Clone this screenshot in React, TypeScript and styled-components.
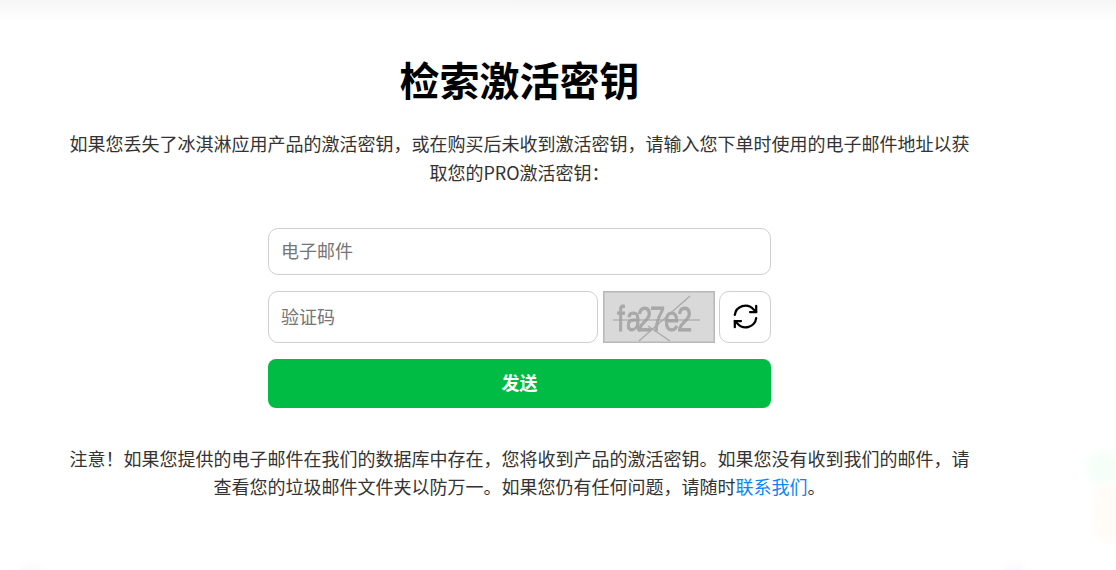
import React from "react";
import styled, { createGlobalStyle } from "styled-components";

const Global = createGlobalStyle`
  html, body { margin: 0; padding: 0; background: #fff; }
  body { font-family: "Noto Sans CJK SC", "Noto Sans", sans-serif; overflow: hidden; }
  * { box-sizing: border-box; }
`;

const Page = styled.main`
  position: relative;
  width: 1116px;
  height: 570px;
  overflow: hidden;
  padding: 0 146.5px 0 69.5px;
  background: #fff;
`;

const TopShade = styled.div`
  position: absolute;
  inset: 0 0 auto 0;
  height: 22px;
  background: linear-gradient(to bottom, #f6f6f6, #fff);
`;

const Blob = styled.div<{ $color: string; $left: number; $top: number; $w: number; $h: number }>`
  position: absolute;
  left: ${(p) => p.$left}px;
  top: ${(p) => p.$top}px;
  width: ${(p) => p.$w}px;
  height: ${(p) => p.$h}px;
  background: ${(p) => p.$color};
  border-radius: 14px;
  filter: blur(4px);
`;

const Content = styled.div`
  position: relative;
  width: 900px;
  padding-top: 50px;
`;

const Title = styled.h1`
  margin: 0 0 21px;
  font-size: 40px;
  line-height: 58px;
  font-weight: 700;
  color: #000;
  text-align: center;
`;

const Text = styled.p`
  margin: 0;
  font-size: 18px;
  line-height: 1.6;
  color: #333;
  text-align: center;
`;

const Form = styled.form`
  width: 503px;
  margin: 41px auto 36px 198.5px;
  display: flex;
  flex-direction: column;
  gap: 16px;
`;

const Input = styled.input<{ $h: number }>`
  display: block;
  width: 100%;
  min-width: 0;
  height: ${(p) => p.$h}px;
  padding: 0 12px 3px;
  border: 1px solid #cfcfcf;
  border-radius: 10px;
  background: #fff;
  font: 400 18px "Noto Sans CJK SC", sans-serif;
  &::placeholder { color: #757575; opacity: 1; }
`;

const CaptchaRow = styled.div`
  display: flex;
  align-items: stretch;
  height: 52px;
`;

const CaptchaInput = styled(Input)`
  flex: 0 0 330px;
  width: 330px;
  padding-bottom: 2px;
`;

const CaptchaImage = styled.svg`
  flex: 0 0 112px;
  width: 112px;
  height: 52px;
  margin-left: 5px;
  display: block;
`;

const RefreshButton = styled.button`
  flex: 0 0 52px;
  width: 52px;
  height: 52px;
  margin-left: 4px;
  padding: 0;
  display: flex;
  align-items: center;
  justify-content: center;
  background: #fff;
  border: 1px solid #cfcfcf;
  border-radius: 10px;
  color: #000;
`;

const Submit = styled.button`
  display: block;
  width: 100%;
  height: 49px;
  padding: 0 0 3px;
  border: none;
  border-radius: 8px;
  background: #00bb44;
  color: #fff;
  font: 700 18px "Noto Sans CJK SC", sans-serif;
`;

const ContactLink = styled.a`
  color: #0d84f0;
  text-decoration: none;
`;

export default function App() {
  return (
    <Page>
      <Global />
      <TopShade />
      <Blob $color="#f5fff7" $left={1086} $top={452} $w={44} $h={32} />
      <Blob $color="#fffbf6" $left={1094} $top={484} $w={34} $h={56} />
      <Blob $color="#f9f9ff" $left={18} $top={566} $w={24} $h={10} />
      <Blob $color="#f9f9ff" $left={1002} $top={566} $w={22} $h={10} />
      <Content>
        <Title>检索激活密钥</Title>
        <Text>
          如果您丢失了冰淇淋应用产品的激活密钥，或在购买后未收到激活密钥，请输入您下单时使用的电子邮件地址以获取您的PRO激活密钥：
        </Text>
        <Form>
          <Input $h={47} placeholder="电子邮件" />
          <CaptchaRow>
            <CaptchaInput $h={52} placeholder="验证码" />
            <CaptchaImage viewBox="0 0 112 52" aria-label="captcha">
              <defs>
                <filter id="soft" x="-5%" y="-5%" width="110%" height="110%">
                  <feGaussianBlur stdDeviation="0.55" />
                </filter>
              </defs>
              <rect x="0.75" y="0.75" width="110.5" height="50.5" fill="#d9d9d9" stroke="#b8b8b8" strokeWidth="1.5" />
              <g filter="url(#soft)">
                <text
                  transform="scale(0.78 1)"
                  x="18 29.5 43.6 60.3 78.2 94.9"
                  y="40"
                  fontFamily="Liberation Sans, sans-serif"
                  fontSize="35"
                  fill="#a8a8a8"
                  stroke="#a8a8a8"
                  strokeWidth="0.9"
                >
                  fa27e2
                </text>
                <path d="M10 29H97" stroke="#a0a0a0" strokeWidth="1.2" fill="none" />
                <path d="M36 50L87 5M45 35L67 50" stroke="#a8a8a8" strokeWidth="1.2" fill="none" />
              </g>
            </CaptchaImage>
            <RefreshButton type="button" aria-label="刷新">
              <svg width="27" height="27" viewBox="0 0 24 24" fill="none" stroke="currentColor" strokeWidth="2" strokeLinecap="round" strokeLinejoin="round">
                <path d="M2.5 10.5A9.5 9.5 0 0 1 19 5.5L21.5 8" />
                <path d="M21.5 2.5V8H16" />
                <path d="M21.5 13.5A9.5 9.5 0 0 1 5 18.5L2.5 16" />
                <path d="M2.5 21.5V16H8" />
              </svg>
            </RefreshButton>
          </CaptchaRow>
          <Submit type="button">发送</Submit>
        </Form>
        <Text>
          注意！如果您提供的电子邮件在我们的数据库中存在，您将收到产品的激活密钥。如果您没有收到我们的邮件，请查看您的垃圾邮件文件夹以防万一。如果您仍有任何问题，请随时<ContactLink href="#">联系我们</ContactLink>。
        </Text>
      </Content>
    </Page>
  );
}
